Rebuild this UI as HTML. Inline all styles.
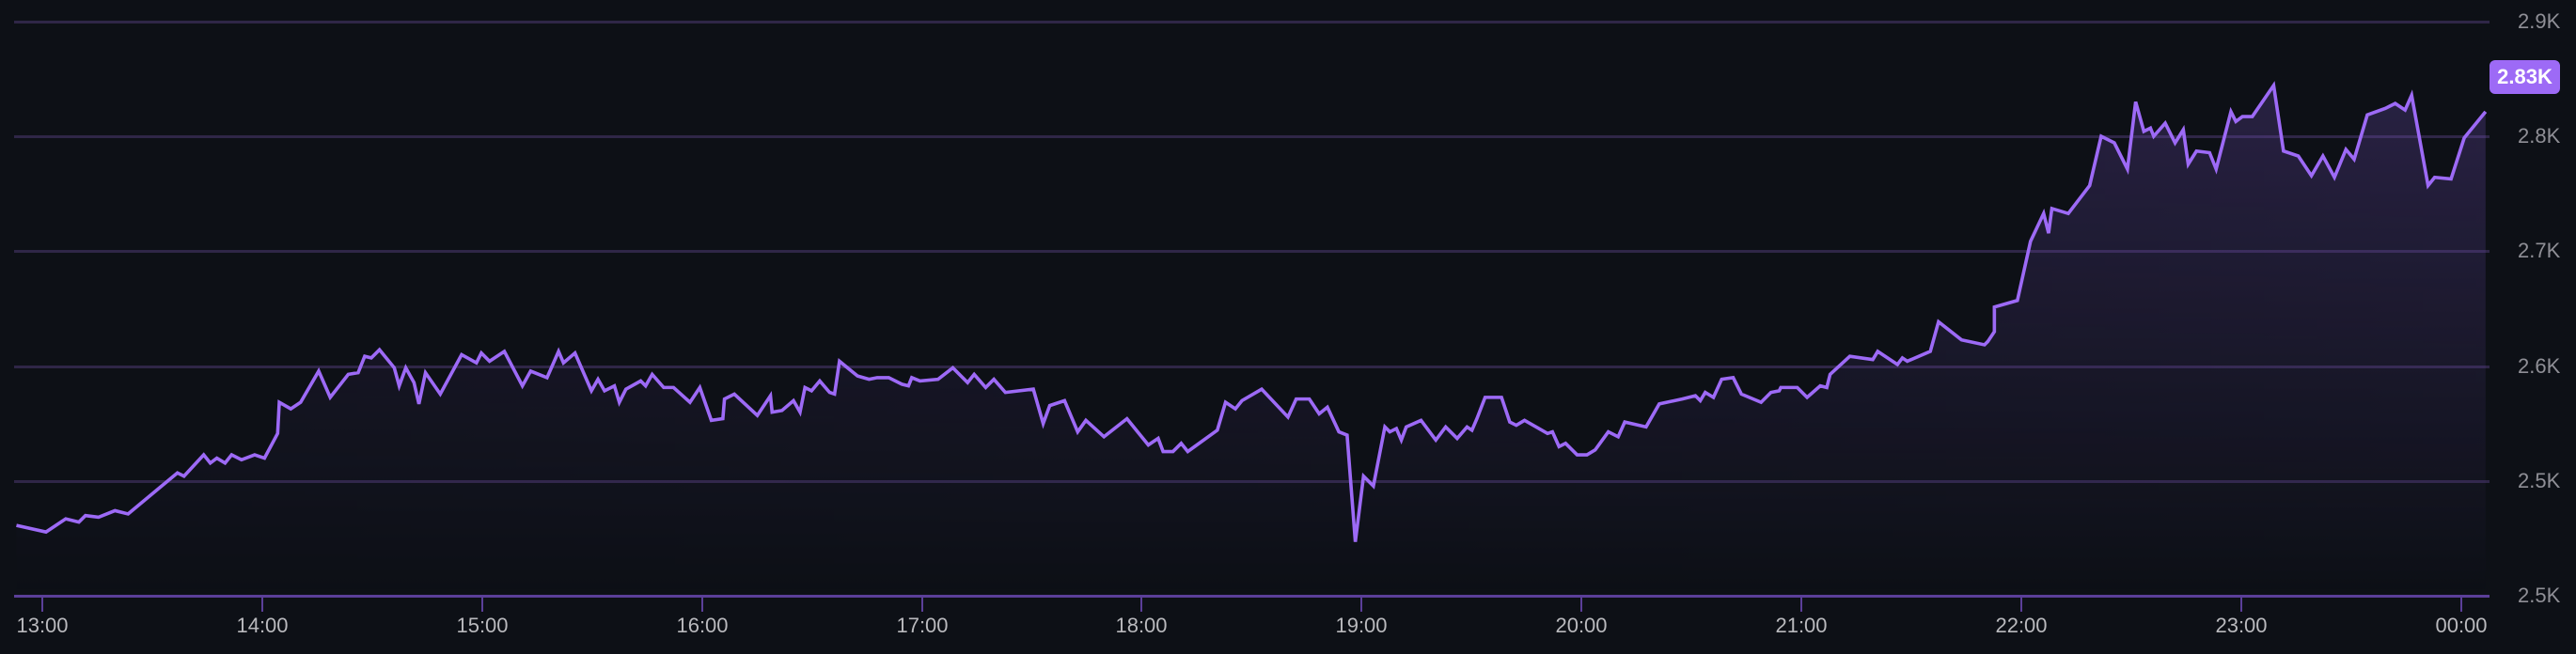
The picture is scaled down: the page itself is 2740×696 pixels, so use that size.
<!DOCTYPE html>
<html><head><meta charset="utf-8"><style>
html,body{margin:0;padding:0;background:#0d1016;}
body{width:2740px;height:696px;overflow:hidden;position:relative;font-family:"Liberation Sans",sans-serif;}
.yl{position:absolute;left:2678px;color:#8f8f96;font-size:22px;line-height:24px;}
.xl{position:absolute;top:654px;color:#b9b9bd;font-size:22px;line-height:24px;width:80px;margin-left:-40px;text-align:center;}
.badge{position:absolute;left:2648px;top:64px;width:75px;height:36px;background:#9d6af6;border-radius:6px;color:#fff;font-size:22px;font-weight:bold;line-height:36px;text-align:center;}
</style></head><body>
<svg width="2740" height="696" style="position:absolute;left:0;top:0">
<defs>
<linearGradient id="v" x1="0" y1="0" x2="0" y2="1"><stop offset="0" stop-color="#7a55c8" stop-opacity="0.6"/><stop offset="1" stop-color="#7a55c8" stop-opacity="0"/></linearGradient>
<linearGradient id="h" x1="0" y1="0" x2="1" y2="0"><stop offset="0" stop-color="#fff" stop-opacity="0.25"/><stop offset="0.6" stop-color="#fff" stop-opacity="0.45"/><stop offset="1" stop-color="#fff" stop-opacity="1"/></linearGradient>
<mask id="m"><rect x="0" y="0" width="2740" height="696" fill="url(#h)"/></mask>
</defs>
<g fill="#2f2647">
<rect x="15" y="22" width="2633" height="3"/>
<rect x="15" y="144" width="2633" height="3"/>
<rect x="15" y="266" width="2633" height="3"/>
<rect x="15" y="389" width="2633" height="3"/>
<rect x="15" y="511" width="2633" height="3"/>
</g>
<g transform="scale(1.7474)">
<path id="area" mask="url(#m)" fill="url(#v)" d="M10,320 L28,324 L40,316 L48,318 L52,314 L60,315 L70,311 L78,313 L108,288 L112,290 L124,277 L128,282 L132,279 L137,282 L141,277 L147,280 L155,277 L161,279 L169,264 L170,245 L177,249 L183,245 L194,226 L201,242 L212,228 L218,227 L222,217 L226,218 L231,213 L240,224 L243,235 L247,224 L252,233 L255,246 L259,227 L268,240 L281,216 L290,221 L293,215 L298,220 L307,214 L318,235 L323,226 L333,230 L340,214 L343,221 L350,215 L360,238 L364,231 L368,238 L374,235 L377,245 L381,237 L390,232 L393,235 L397,228 L404,236 L410,236 L420,245 L426,236 L433,256 L440,255 L441,243 L447,240 L461,253 L469,241 L470,251 L476,250 L483,244 L487,251 L490,236 L494,238 L499,232 L505,239 L508,240 L511,220 L522,229 L529,231 L534,230 L541,230 L549,234 L553,235 L555,230 L560,232 L571,231 L580,224 L589,233 L593,228 L600,236 L605,231 L612,239 L629,237 L635,258 L639,247 L648,244 L656,263 L661,256 L672,266 L686,255 L699,271 L705,267 L708,275 L714,275 L719,270 L723,275 L741,262 L746,245 L752,249 L756,244 L768,237 L784,254 L789,243 L797,243 L803,252 L808,248 L815,263 L820,265 L825,330 L830,290 L836,296 L843,260 L846,263 L850,261 L853,268 L856,260 L865,256 L874,268 L880,260 L887,267 L893,260 L896,262 L899,255 L904,242 L914,242 L919,257 L923,259 L928,256 L942,264 L945,263 L949,272 L953,270 L960,277 L966,277 L971,274 L979,263 L985,266 L989,257 L1002,260 L1010,246 L1024,243 L1032,241 L1035,244 L1038,239 L1043,242 L1048,231 L1055,230 L1060,240 L1072,245 L1078,239 L1083,238 L1084,236 L1094,236 L1100,242 L1108,235 L1112,236 L1114,228 L1126,217 L1140,219 L1143,214 L1155,222 L1158,218 L1161,220 L1175,214 L1180,196 L1194,207 L1208,210 L1210,208 L1214,202 L1214,187 L1228,183 L1236,147 L1244,130 L1247,142 L1249,127 L1259,130 L1272,113 L1279,83 L1287,87 L1295,103 L1300,62 L1305,80 L1309,78 L1311,83 L1318,75 L1324,87 L1329,79 L1332,100 L1337,92 L1345,93 L1349,103 L1358,68 L1361,74 L1365,71 L1371,71 L1384,52 L1390,92 L1399,95 L1407,107 L1414,95 L1421,108 L1428,91 L1433,97 L1441,70 L1452,66 L1458,63 L1464,67 L1468,58 L1478,113 L1482,108 L1492,109 L1500,84 L1513,68 L1513,362 L10,362 Z"/>
<path fill="none" stroke="#9d6af6" stroke-width="3.6" vector-effect="non-scaling-stroke" stroke-linejoin="miter" d="M10,320 L28,324 L40,316 L48,318 L52,314 L60,315 L70,311 L78,313 L108,288 L112,290 L124,277 L128,282 L132,279 L137,282 L141,277 L147,280 L155,277 L161,279 L169,264 L170,245 L177,249 L183,245 L194,226 L201,242 L212,228 L218,227 L222,217 L226,218 L231,213 L240,224 L243,235 L247,224 L252,233 L255,246 L259,227 L268,240 L281,216 L290,221 L293,215 L298,220 L307,214 L318,235 L323,226 L333,230 L340,214 L343,221 L350,215 L360,238 L364,231 L368,238 L374,235 L377,245 L381,237 L390,232 L393,235 L397,228 L404,236 L410,236 L420,245 L426,236 L433,256 L440,255 L441,243 L447,240 L461,253 L469,241 L470,251 L476,250 L483,244 L487,251 L490,236 L494,238 L499,232 L505,239 L508,240 L511,220 L522,229 L529,231 L534,230 L541,230 L549,234 L553,235 L555,230 L560,232 L571,231 L580,224 L589,233 L593,228 L600,236 L605,231 L612,239 L629,237 L635,258 L639,247 L648,244 L656,263 L661,256 L672,266 L686,255 L699,271 L705,267 L708,275 L714,275 L719,270 L723,275 L741,262 L746,245 L752,249 L756,244 L768,237 L784,254 L789,243 L797,243 L803,252 L808,248 L815,263 L820,265 L825,330 L830,290 L836,296 L843,260 L846,263 L850,261 L853,268 L856,260 L865,256 L874,268 L880,260 L887,267 L893,260 L896,262 L899,255 L904,242 L914,242 L919,257 L923,259 L928,256 L942,264 L945,263 L949,272 L953,270 L960,277 L966,277 L971,274 L979,263 L985,266 L989,257 L1002,260 L1010,246 L1024,243 L1032,241 L1035,244 L1038,239 L1043,242 L1048,231 L1055,230 L1060,240 L1072,245 L1078,239 L1083,238 L1084,236 L1094,236 L1100,242 L1108,235 L1112,236 L1114,228 L1126,217 L1140,219 L1143,214 L1155,222 L1158,218 L1161,220 L1175,214 L1180,196 L1194,207 L1208,210 L1210,208 L1214,202 L1214,187 L1228,183 L1236,147 L1244,130 L1247,142 L1249,127 L1259,130 L1272,113 L1279,83 L1287,87 L1295,103 L1300,62 L1305,80 L1309,78 L1311,83 L1318,75 L1324,87 L1329,79 L1332,100 L1337,92 L1345,93 L1349,103 L1358,68 L1361,74 L1365,71 L1371,71 L1384,52 L1390,92 L1399,95 L1407,107 L1414,95 L1421,108 L1428,91 L1433,97 L1441,70 L1452,66 L1458,63 L1464,67 L1468,58 L1478,113 L1482,108 L1492,109 L1500,84 L1513,68"/>
</g>
<rect x="15" y="633" width="2633" height="3" fill="#5b3f99"/>
<g fill="#5b3f99">
<rect x="44" y="635" width="2" height="16"/><rect x="278" y="635" width="2" height="16"/><rect x="512" y="635" width="2" height="16"/><rect x="746" y="635" width="2" height="16"/><rect x="980" y="635" width="2" height="16"/><rect x="1213" y="635" width="2" height="16"/><rect x="1447" y="635" width="2" height="16"/><rect x="1681" y="635" width="2" height="16"/><rect x="1915" y="635" width="2" height="16"/><rect x="2149" y="635" width="2" height="16"/><rect x="2383" y="635" width="2" height="16"/><rect x="2617" y="635" width="2" height="16"/>
</g>
</svg>
<div class="yl" style="top:11px">2.9K</div>
<div class="yl" style="top:133px">2.8K</div>
<div class="yl" style="top:255px">2.7K</div>
<div class="yl" style="top:378px">2.6K</div>
<div class="yl" style="top:500px">2.5K</div>
<div class="yl" style="top:622px">2.5K</div>
<div class="badge">2.83K</div>
<div class="xl" style="left:45px">13:00</div>
<div class="xl" style="left:279px">14:00</div>
<div class="xl" style="left:513px">15:00</div>
<div class="xl" style="left:747px">16:00</div>
<div class="xl" style="left:981px">17:00</div>
<div class="xl" style="left:1214px">18:00</div>
<div class="xl" style="left:1448px">19:00</div>
<div class="xl" style="left:1682px">20:00</div>
<div class="xl" style="left:1916px">21:00</div>
<div class="xl" style="left:2150px">22:00</div>
<div class="xl" style="left:2384px">23:00</div>
<div class="xl" style="left:2618px">00:00</div>
</body></html>
